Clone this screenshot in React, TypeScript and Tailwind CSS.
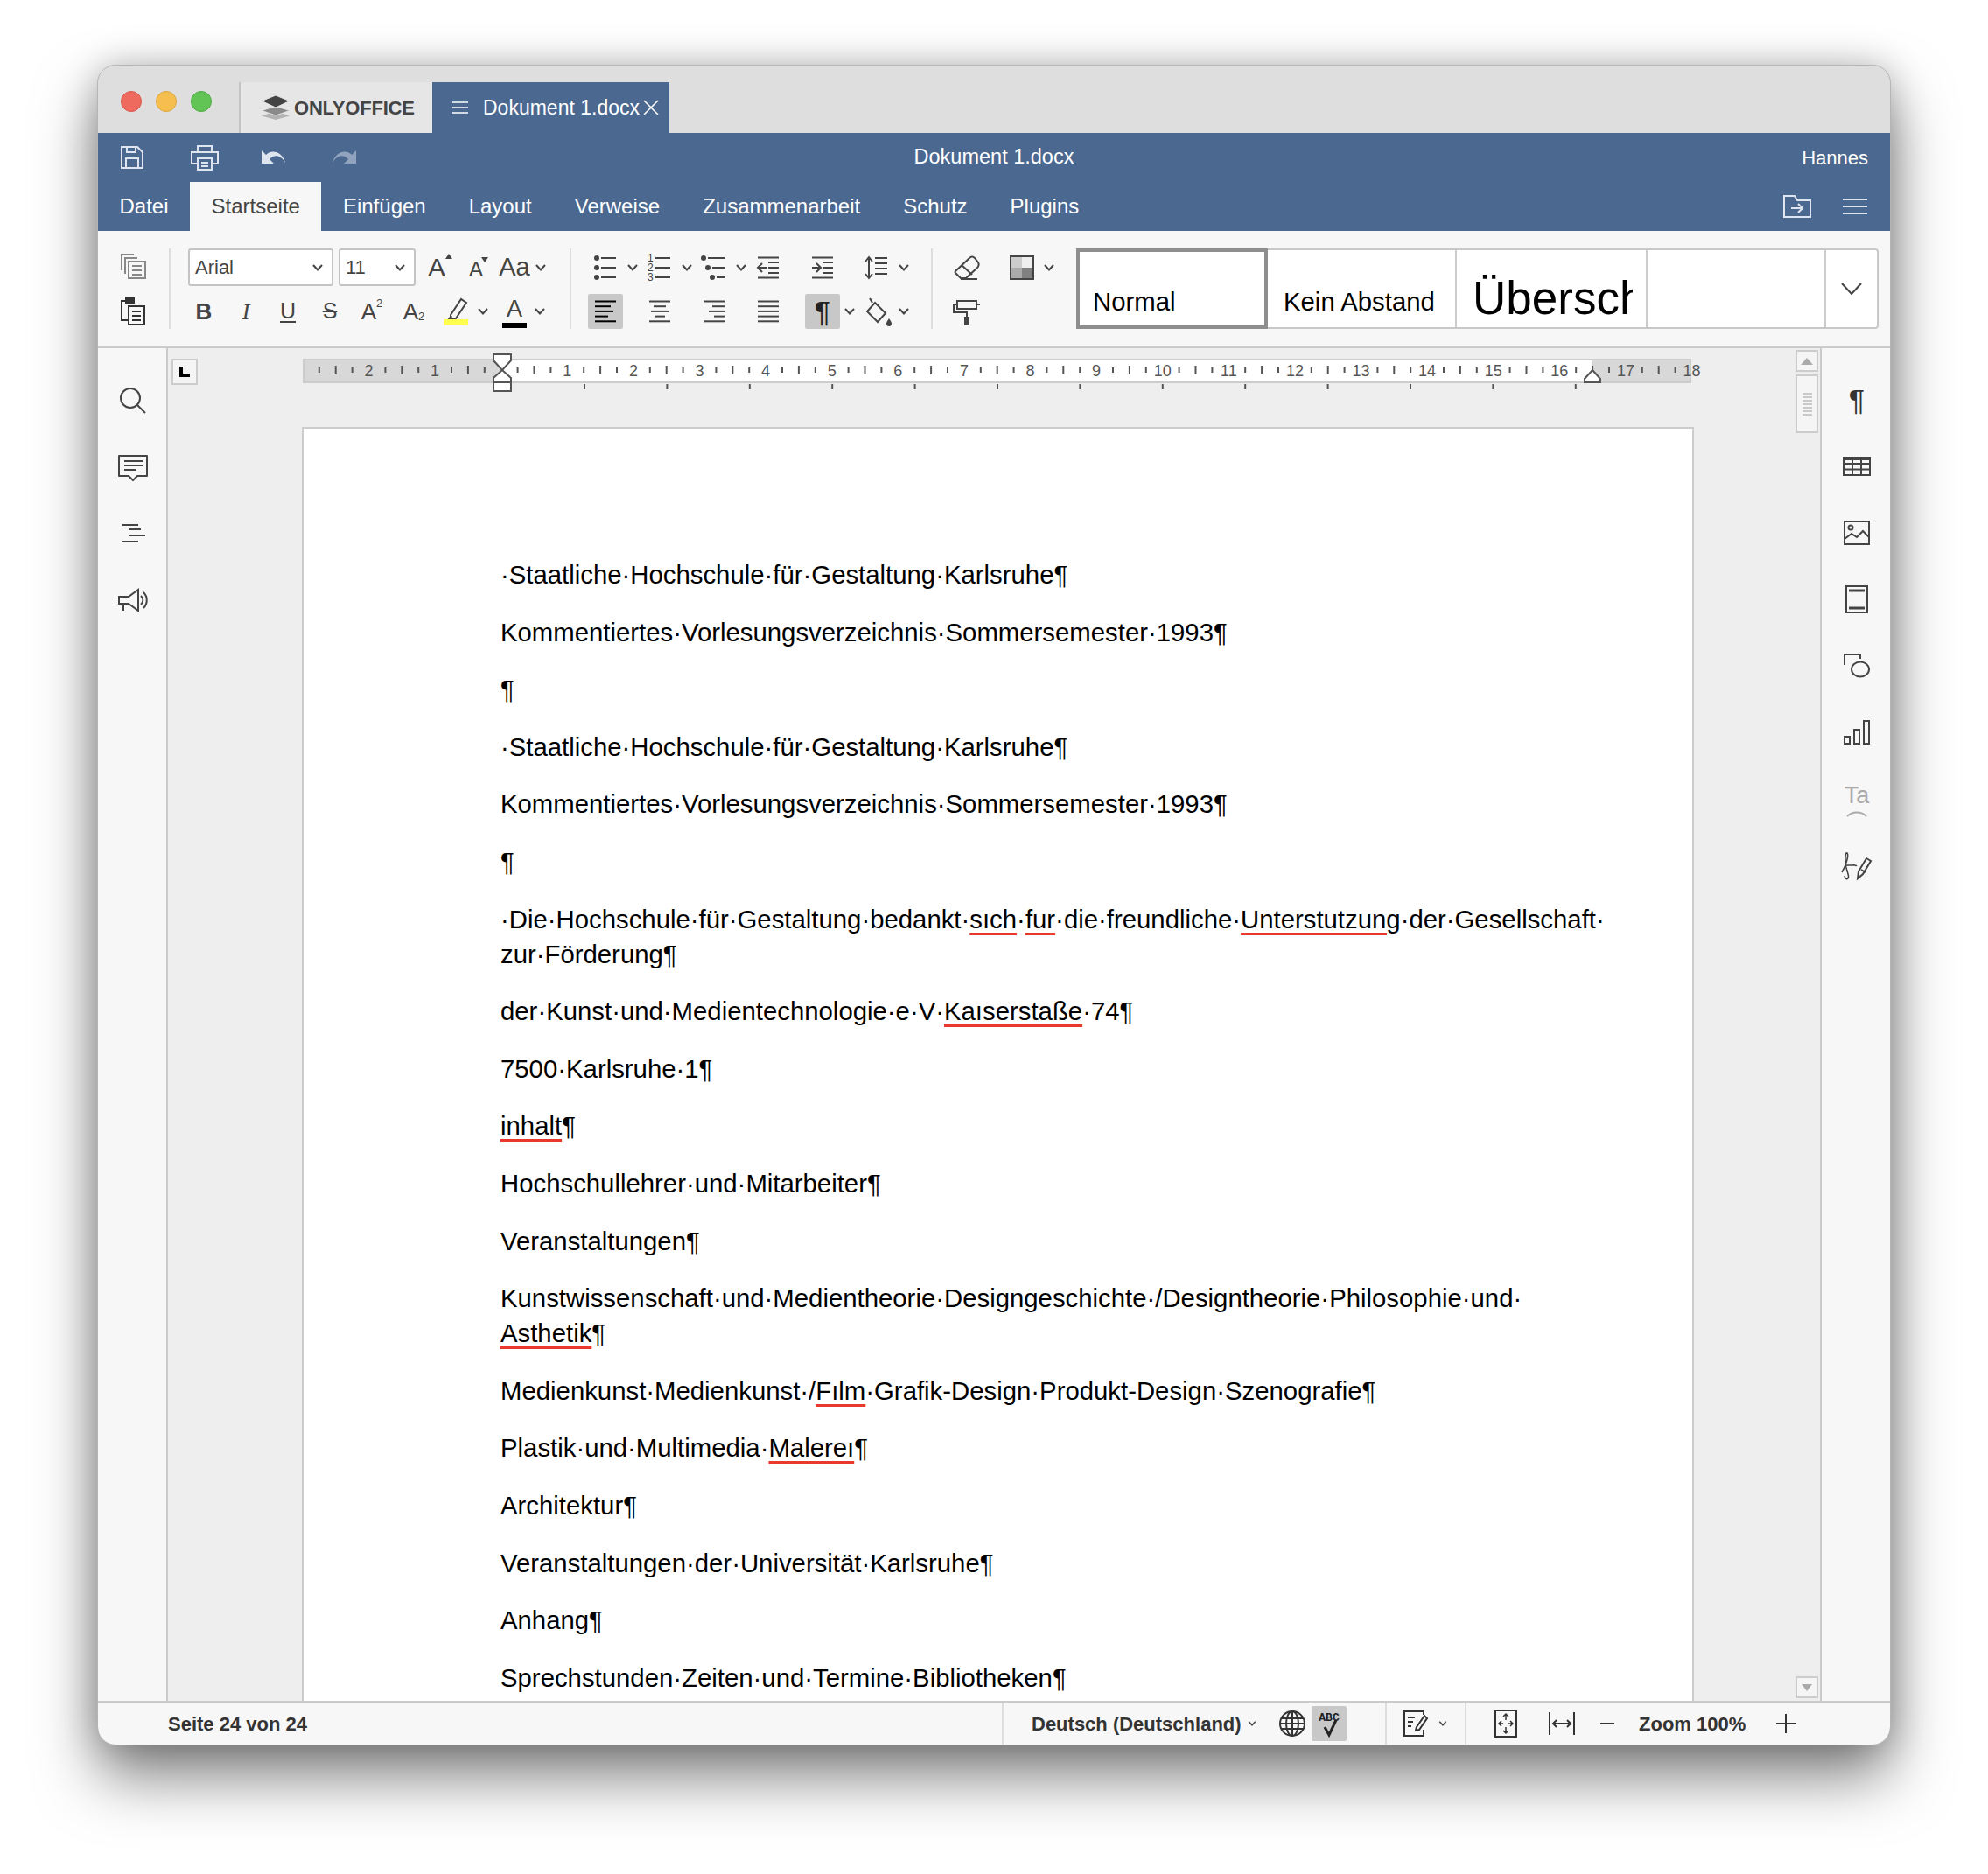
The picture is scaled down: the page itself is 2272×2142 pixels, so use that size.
import type { ReactNode } from 'react';

const tabs = ['Datei', 'Startseite', 'Einfügen', 'Layout', 'Verweise', 'Zusammenarbeit', 'Schutz', 'Plugins'];

// _word_ marks a word with the red spellcheck line
const paragraphs = [
  ['·Staatliche·Hochschule·für·Gestaltung·Karlsruhe¶'],
  ['Kommentiertes·Vorlesungsverzeichnis·Sommersemester·1993¶'],
  ['¶'],
  ['·Staatliche·Hochschule·für·Gestaltung·Karlsruhe¶'],
  ['Kommentiertes·Vorlesungsverzeichnis·Sommersemester·1993¶'],
  ['¶'],
  ['·Die·Hochschule·für·Gestaltung·bedankt·_sıch_·_fur_·die·freundliche·_Unterstutzung_·der·Gesellschaft·', 'zur·Förderung¶'],
  ['der·Kunst·und·Medientechnologie·e·V·_Kaıserstaße_·74¶'],
  ['7500·Karlsruhe·1¶'],
  ['_inhalt_¶'],
  ['Hochschullehrer·und·Mitarbeiter¶'],
  ['Veranstaltungen¶'],
  ['Kunstwissenschaft·und·Medientheorie·Designgeschichte·/Designtheorie·Philosophie·und·', '_Asthetik_¶'],
  ['Medienkunst·Medienkunst·/_Fılm_·Grafik-Design·Produkt-Design·Szenografie¶'],
  ['Plastik·und·Multimedia·_Malereı_¶'],
  ['Architektur¶'],
  ['Veranstaltungen·der·Universität·Karlsruhe¶'],
  ['Anhang¶'],
  ['Sprechstunden·Zeiten·und·Termine·Bibliotheken¶'],
];

const Ico = ({ children, className = 'text-[#444]' }: { children: ReactNode; className?: string }) => (
  <svg viewBox="0 0 40 40" fill="none" stroke="currentColor" strokeWidth="2" className={`w-10 h-10 shrink-0 ${className}`}>
    {children}
  </svg>
);

const Chev = ({ className = 'w-[22px]' }: { className?: string }) => (
  <span className={`flex items-center justify-center shrink-0 ${className}`}>
    <svg width="12" height="8" viewBox="0 0 12 8" fill="none" stroke="#444" strokeWidth="2"><path d="M1 1l5 5.5L11 1" /></svg>
  </span>
);

const Cell = ({ className, children }: { className: string; children: ReactNode }) => (
  <span className={`flex items-center justify-center shrink-0 h-10 ${className}`}>{children}</span>
);

const Blank = () => <span className="w-[22px] shrink-0" />;

const Lines = ({ rows }: { rows: [number, number][] }) => (
  <>
    {rows.map(([a, b], i) => (
      <path key={i} d={`M${a} ${8.5 + i * 5.7}H${b}`} />
    ))}
  </>
);

const Ruler = () => {
  const marks = Array.from({ length: 116 }, (_, i) => i - 11);
  return (
    <svg width="1600" height="46" className="ml-[120px] shrink-0 font-['Liberation_Sans',sans-serif]">
      <rect x="1" y="7" width="1585" height="26" fill="#d8d8d8" stroke="#ccc" strokeWidth="2" />
      <rect x="228" y="8" width="1246" height="24" fill="#fff" />
      <path d="M228 7H1474" stroke="#ccc" strokeWidth="2" />
      <path d="M228 33H1474" stroke="#ccc" strokeWidth="2" />
      {marks.map((k) => {
        const x = 226.7 + k * 18.9;
        if (k === 0) return null;
        if (k % 4 === 0) {
          return (
            <text key={k} x={x} y="26" textAnchor="middle" fontSize="18" fill="#555">
              {Math.abs(k / 4)}
            </text>
          );
        }
        const mid = k % 2 === 0;
        return <path key={k} d={`M${x} ${mid ? 14 : 16}V${mid ? 24 : 22}`} stroke="#555" strokeWidth="2" />;
      })}
      {Array.from({ length: 13 }, (_, k) => (
        <path key={k} d={`M${322 + k * 94.4} 35V41`} stroke="#555" strokeWidth="2" />
      ))}
      <path d="M218 1H238V8L228 19L218 8Z" fill="#fff" stroke="#555" strokeWidth="2" />
      <path d="M228 19L238 28V43H218V28Z" fill="#fff" stroke="#555" strokeWidth="2" />
      <path d="M218 33H238" stroke="#555" strokeWidth="2" />
      <path d="M1474 19L1483 29V33H1465V29Z" fill="#fff" stroke="#555" strokeWidth="2" />
    </svg>
  );
};

const Paragraph = ({ lines }: { lines: string[] }) => (
  <div className="mb-[25.6px]">
    {lines.map((line, i) => (
      <div key={i} className="whitespace-pre h-[40px] leading-[40px]">
        {line.split('_').map((part, j) =>
          j % 2 === 1 ? (
            <span key={j} className="underline decoration-[#e8392c] decoration-[2.5px] underline-offset-[5px]">{part}</span>
          ) : (
            <span key={j}>{part}</span>
          ),
        )}
      </div>
    ))}
  </div>
);

export default function App() {
  return (
    <div className="h-[2142px] overflow-hidden bg-white pt-[75px] pl-[112px] font-['Liberation_Sans',sans-serif]">
      <div className="w-[2048px] h-[1919px] flex flex-col rounded-[20px] overflow-hidden bg-[#f7f7f7] outline outline-1 outline-[#b5b5b5]" style={{ boxShadow: '0 36px 70px rgba(0,0,0,0.5), 0 0 40px rgba(0,0,0,0.22)', overflow: 'clip' }}>
        {/* Title bar */}
        <div className="h-[77px] shrink-0 bg-[#dedede] flex pt-[19px]">
          <div className="w-[161px] h-[58px] flex items-start pt-[10px] gap-[20px] pl-[26px]">
            <span className="w-6 h-6 rounded-full bg-[#ee6a5f] border border-[#d9574c]" />
            <span className="hidden" />
            <span className="w-6 h-6 rounded-full bg-[#f5be4f] border border-[#dba63c] -ml-[4px]" />
            <span className="w-6 h-6 rounded-full bg-[#61c454] border border-[#50ab44] -ml-[4px]" />
          </div>
          <div className="w-[221px] h-[58px] bg-[#e6e6e6] border-l-2 border-[#c4c4c4] flex items-center pl-[23px] gap-[4px]">
            <svg width="34" height="28" viewBox="0 0 34 28">
              <path d="M17 18L1 23.5L17 28L33 23.5Z" fill="#b3b3b3" />
              <path d="M17 12.5L1 17.5L17 23L33 17.5Z" fill="#8a8a8a" stroke="#e6e6e6" strokeWidth="1" />
              <path d="M17 0L1 6.5L17 14L33 6.5Z" fill="#444" stroke="#e6e6e6" strokeWidth="1" />
            </svg>
            <span className="text-[22px] font-bold text-[#444] tracking-[-0.2px]">ONLYOFFICE</span>
          </div>
          <div className="w-[271px] h-[58px] bg-[#4b6890] flex items-center text-white">
            <svg width="20" height="16" viewBox="0 0 20 16" stroke="#fff" strokeWidth="1.6" className="ml-[22px]"><path d="M1 2H19M1 8H19M1 14H19" /></svg>
            <span className="ml-[16px] text-[23px] whitespace-nowrap">Dokument 1.docx</span>
            <svg width="18" height="18" viewBox="0 0 18 18" stroke="#fff" strokeWidth="1.6" className="ml-[4px]"><path d="M1 1L17 17M17 1L1 17" /></svg>
          </div>
        </div>

        {/* Header */}
        <div className="h-[112px] shrink-0 bg-[#4b6890] text-white flex flex-col">
          <div className="h-[56px] relative flex items-center">
            <svg width="28" height="28" viewBox="0 0 28 28" fill="none" stroke="#dfe5ee" strokeWidth="2" className="ml-[25px]">
              <path d="M2 2H20L26 8V26H2Z" /><path d="M7 26V15H21V26M8 2V8H18V2" />
            </svg>
            <svg width="34" height="30" viewBox="0 0 34 30" fill="none" stroke="#dfe5ee" strokeWidth="2" className="ml-[52px]">
              <path d="M9 9V2H25V9M9 22H2V9H32V22H25" /><path d="M9 16H25V29H9ZM13 21H21M13 25H21" />
            </svg>
            <svg width="30" height="20" viewBox="0 0 30 20" className="ml-[47px]">
              <path d="M1 2V17H15L10 12C15 6 23 7 28 16C25 4 13 0 6 7Z" fill="#dfe5ee" />
            </svg>
            <svg width="30" height="20" viewBox="0 0 30 20" className="ml-[50px]">
              <path d="M29 2V17H15L20 12C15 6 7 7 2 16C5 4 17 0 24 7Z" fill="#92a4bd" />
            </svg>
            <span className="absolute left-0 right-0 text-center text-[23.5px] pl-[-4px]">Dokument 1.docx</span>
            <span className="absolute right-[25px] text-[22px]">Hannes</span>
          </div>
          <div className="h-[56px] flex items-stretch text-[24px]">
            {tabs.map((t) => (
              <div key={t} className={`px-[24.5px] flex items-center ${t === 'Startseite' ? 'bg-[#f7f7f7] text-[#444]' : ''}`}>{t}</div>
            ))}
            <div className="flex-1 flex items-center justify-end gap-[36px] pr-[26px]">
              <svg width="32" height="26" viewBox="0 0 32 26" fill="none" stroke="#dfe5ee" strokeWidth="2" className="mr-[0px]">
                <path d="M1 1H13L16 6H31V25H1Z" /><path d="M9 15H22M17 10L22 15L17 20" />
              </svg>
              <svg width="28" height="20" viewBox="0 0 28 20" stroke="#dfe5ee" strokeWidth="2"><path d="M0 2H28M0 10H28M0 18H28" /></svg>
            </div>
          </div>
        </div>

        {/* Toolbar */}
        <div className="h-[134px] shrink-0 border-b-2 border-[#cbcbcb] pt-[20px] flex text-[#444]">
          <div className="w-[83px] h-[92px] pl-[20px] border-r-2 border-[#ddd] flex flex-col justify-between">
            <Ico className="text-[#888]">
              <path d="M7 25V7H21" /><path d="M11 29V11H25" /><path d="M15 15H34V34H15Z" /><path d="M19 20H30M19 25H30M19 30H30" />
            </Ico>
            <Ico className="text-[#333]">
              <path d="M14 8H7V30H15" /><path d="M12 5H21V10H12Z" fill="currentColor" /><path d="M15 14H33V35H15Z" /><path d="M19 20H29M19 25H29M19 30H29" />
            </Ico>
          </div>

          <div className="w-[458px] h-[92px] border-r-2 border-[#ddd] flex flex-col justify-between">
            <div className="h-[43px] flex pl-[20px]">
              <div className="w-[166px] h-[43px] bg-white border-2 border-[#c4c4c4] rounded-[3px] flex items-center justify-between pl-[6px] pr-[10px] text-[22px]">
                Arial<Chev className="w-3" />
              </div>
              <div className="w-[88px] h-[43px] ml-[6px] bg-white border-2 border-[#c4c4c4] rounded-[3px] flex items-center justify-between pl-[6px] pr-[10px] text-[22px]">
                11<Chev className="w-3" />
              </div>
              <Cell className="w-[48px] !h-[43px] relative text-[30px] leading-none">A<svg width="8" height="6" viewBox="0 0 8 6" className="absolute top-[6px] right-[6px]"><path d="M0 6L4 0L8 6Z" fill="#444" /></svg></Cell>
              <Cell className="w-[42px] !h-[43px] relative text-[24px] leading-none pt-[4px]">A<svg width="8" height="6" viewBox="0 0 8 6" className="absolute top-[10px] right-[7px]"><path d="M0 0L4 6L8 0Z" fill="#444" /></svg></Cell>
              <Cell className="w-[46px] !h-[43px] text-[29px] leading-none">Aa</Cell>
              <Chev className="w-[14px]" />
            </div>
            <div className="h-10 flex pl-[14px]">
              <Cell className="w-[48px] text-[26px] font-bold">B</Cell>
              <Cell className="w-[48px] text-[26px] italic font-['Liberation_Serif',serif]">I</Cell>
              <Cell className="w-[48px] text-[25px] underline underline-offset-[3px] decoration-[2px]">U</Cell>
              <Cell className="w-[48px] text-[25px] line-through decoration-[2px]">S</Cell>
              <Cell className="w-[48px] text-[26px]">A<sup className="text-[13px] -mt-[6px]">2</sup></Cell>
              <Cell className="w-[48px] text-[26px]">A<sub className="text-[13px] mt-[6px]">2</sub></Cell>
              <Cell className="w-[48px]">
                <Ico>
                  <path d="M14 24L26 6L32 10L20 28L14 28Z" /><path d="M15 25L11 30H17" fill="currentColor" />
                  <path d="M9 32.500H37" stroke="#ffff4d" strokeWidth="7" transform="translate(-3 0)" />
                </Ico>
              </Cell>
              <Chev className="w-[14px]" />
              <Cell className="w-[44px] ml-[7px] relative text-[27px] leading-none pb-[6px]">A<span className="absolute left-[8px] right-[8px] bottom-[1px] h-[6px] bg-black" /></Cell>
              <Chev className="w-[14px]" />
            </div>
          </div>

          <div className="w-[413px] h-[92px] pl-[19px] border-r-2 border-[#ddd] flex flex-col justify-between">
            <div className="h-[43px] flex items-center">
              <Ico>
                <circle cx="10" cy="9" r="3" fill="currentColor" stroke="none" /><circle cx="10" cy="20" r="3" fill="currentColor" stroke="none" /><circle cx="10" cy="31" r="3" fill="currentColor" stroke="none" />
                <path d="M15 9H32M15 20H32M15 31H32" />
              </Ico>
              <Chev />
              <Ico>
                <text x="6" y="13" fontSize="12" fill="currentColor" stroke="none">1</text><text x="6" y="24" fontSize="12" fill="currentColor" stroke="none">2</text><text x="6" y="35" fontSize="12" fill="currentColor" stroke="none">3</text>
                <path d="M15 9H32M15 20H32M15 31H32" />
              </Ico>
              <Chev />
              <Ico>
                <circle cx="8" cy="9" r="3" fill="currentColor" stroke="none" /><circle cx="13" cy="20" r="3" fill="currentColor" stroke="none" /><circle cx="18" cy="31" r="3" fill="currentColor" stroke="none" />
                <path d="M13 9H32M18 20H32M23 31H32" />
              </Ico>
              <Chev />
              <Ico>
                <path d="M8 8.500H32M8 31.500H32M20 14H32M20 20H32M20 26H32" /><path d="M18 20H8M13 15L8 20L13 25" />
              </Ico>
              <Blank />
              <Ico>
                <path d="M8 8.500H32M8 31.500H32M20 14H32M20 20H32M20 26H32" /><path d="M8 20H18M13 15L18 20L13 25" />
              </Ico>
              <Blank />
              <Ico>
                <path d="M11 9V31M7 13L11 8L15 13M7 27L11 32L15 27" /><path d="M18 9H32M18 15H32M18 21H32M18 27H32" />
              </Ico>
              <Chev />
            </div>
            <div className="h-10 flex items-center">
              <span className="rounded-[2px] bg-[#c8c8c8]"><Ico className="text-black"><Lines rows={[[8, 32], [8, 26], [8, 29], [8, 23], [8, 32]]} /></Ico></span>
              <Blank />
              <Ico><Lines rows={[[8, 32], [13, 27], [10, 30], [14, 26], [8, 32]]} /></Ico>
              <Blank />
              <Ico><Lines rows={[[8, 32], [18, 32], [14, 32], [20, 32], [8, 32]]} /></Ico>
              <Blank />
              <Ico><Lines rows={[[8, 32], [8, 32], [8, 32], [8, 32], [8, 32]]} /></Ico>
              <Blank />
              <span className="w-10 h-10 rounded-[2px] bg-[#c8c8c8] flex items-center justify-center text-[34px] leading-none text-[#222]">¶</span>
              <Chev />
              <Ico>
                <path d="M12 5L15 10M18 10L30 22L21 32L9 20Z" /><path d="M34 28C36 31 37 32 37 34A3 3 0 0 1 31 34C31 32 32 31 34 28Z" fill="currentColor" stroke="none" />
              </Ico>
              <Chev />
            </div>
          </div>

          <div className="w-[164px] h-[92px] pl-[19px] flex flex-col justify-between">
            <div className="h-[43px] flex items-center">
              <Ico>
                <path d="M7 24L23 9C25 7 27 7 29 9L33 14C34 16 34 18 32 20L19 32H13L7 26C6 25 6 25 7 24Z" /><path d="M14 17L26 28M13 33H32" />
              </Ico>
              <div className="ml-[23px] w-10 flex items-center justify-center">
                <span className="w-7 h-7 grid grid-cols-2 border-2 border-[#444]">
                  <span className="bg-[#ccc]" /><span className="bg-[#eee]" /><span className="bg-[#aaa]" /><span className="bg-[#808080]" />
                </span>
              </div>
              <Chev />
            </div>
            <div className="h-10">
              <Ico>
                <path d="M9 8H31V17H9ZM31 12H35M9 12H5V21H20V26" /><path d="M17 26H23V36H17Z" fill="currentColor" stroke="none" />
              </Ico>
            </div>
          </div>

          <div className="w-[917px] h-[92px] flex text-black">
            <div className="w-[219px] border-[4px] border-[#8e8e8e] bg-white flex items-end pb-[9px] pl-[15px] text-[29.33px] leading-[36px]">Normal</div>
            <div className="flex-1 flex border-2 border-l-0 border-[#c8c8c8] rounded-r-[4px] bg-white">
              <div className="w-[216px] border-r-2 border-[#ccc] flex items-end pb-[11px] pl-[18px] text-[29.33px] leading-[36px] whitespace-nowrap">Kein Abstand</div>
              <div className="w-[218px] border-r-2 border-[#ccc] pl-[18px] pr-[15px]">
                <div className="overflow-hidden whitespace-nowrap h-full flex items-end pb-[3px] text-[53px] leading-[60px]">Überschrift</div>
              </div>
              <div className="w-[204px] border-r-2 border-[#ccc]" />
              <div className="flex-1 flex items-center justify-center">
                <svg width="24" height="14" viewBox="0 0 24 14" fill="none" stroke="#444" strokeWidth="2"><path d="M1 1L12 13L23 1" /></svg>
              </div>
            </div>
          </div>
        </div>

        {/* Main */}
        <div className="flex-1 min-h-0 flex">
          <div className="w-[80px] shrink-0 border-r-2 border-[#cbcbcb] flex flex-col pt-[22px] pl-[20px]">
            <div className="h-[76px] flex items-center"><Ico><circle cx="17" cy="17" r="11" /><path d="M25 25L34 34" /></Ico></div>
            <div className="h-[76px] flex items-center"><Ico><path d="M4 7H36V30H25L20 35L15 30H4Z" strokeLinejoin="round" /><path d="M10 13H31M10 18H31M10 23H24" /></Ico></div>
            <div className="h-[76px] flex items-center"><Ico><path d="M8 10H26M15 15H29M15 22H34M8 29H26" /></Ico></div>
            <div className="h-[76px] flex items-center"><Ico><path d="M4 16H15L26 8V32L15 24H4ZM9 24V32" /><path d="M29 15C32 18 32 22 29 25M32 11C37 16 37 24 32 29" /></Ico></div>
          </div>

          <div className="flex-1 min-w-0 flex bg-[#eee]">
            <div className="flex-1 min-w-0 flex flex-col pt-[6px]">
              <div className="flex items-start h-[46px] shrink-0">
                <div className="mt-[6px] ml-[4px] w-[30px] h-[30px] shrink-0 border-2 border-[#ccc] bg-[#f5f5f5] flex items-center justify-center">
                  <svg width="14" height="14" viewBox="0 0 14 14"><path d="M1 1H5V9H13V13H1Z" fill="#000" /></svg>
                </div>
                <Ruler />
              </div>
              <div className="mt-[38px] ml-[153px] w-[1591px] flex-1 min-h-0 overflow-hidden bg-white border-2 border-b-0 border-[#ccc] pt-[147px] pl-[225px] text-[29.33px] text-black">
                {paragraphs.map((lines, i) => (
                  <Paragraph key={i} lines={lines} />
                ))}
              </div>
            </div>
            <div className="w-[28px] shrink-0 pr-[2px] pt-[2px] pb-[3px] flex flex-col">
              <div className="h-[25px] border-2 border-[#ccc] bg-[#f5f5f5] flex items-center justify-center">
                <svg width="14" height="8" viewBox="0 0 14 8"><path d="M0 8L7 0L14 8Z" fill="#aaa" /></svg>
              </div>
              <div className="h-[67px] mt-[3px] border-2 border-[#ccc] bg-[#f5f5f5] flex items-center justify-center">
                <svg width="11" height="26" viewBox="0 0 11 26" stroke="#bbb" strokeWidth="1.5"><path d="M0 1H11M0 5H11M0 9H11M0 13H11M0 17H11M0 21H11M0 25H11" /></svg>
              </div>
              <div className="flex-1" />
              <div className="h-[25px] border-2 border-[#ccc] bg-[#f5f5f5] flex items-center justify-center">
                <svg width="12" height="8" viewBox="0 0 12 8"><path d="M0 0L6 8L12 0Z" fill="#aaa" /></svg>
              </div>
            </div>
          </div>

          <div className="w-[80px] shrink-0 border-l-2 border-[#cbcbcb] flex flex-col pt-[21px] pl-[20px] text-[#a3a3a3]">
            <div className="h-[76px] flex items-center justify-center w-10 text-[34px] text-[#333]">¶</div>
            <div className="h-[76px] flex items-center"><Ico><path d="M5 10H35V30H5ZM5 17H35M5 23.500H35M15 10V30M25 10V30" /><path d="M5 11.500H35" strokeWidth="3" /></Ico></div>
            <div className="h-[76px] flex items-center"><Ico><path d="M6 7H34V33H6Z" /><circle cx="13" cy="14" r="2.500" /><path d="M6 27L14 21L20 25L27 18L34 25" /></Ico></div>
            <div className="h-[76px] flex items-center"><Ico><path d="M8 5H32V35H8Z" /><path d="M11 10H29M11 30H29" strokeWidth="3" /></Ico></div>
            <div className="h-[76px] flex items-center"><Ico><path d="M6 19V7H24V12" /><ellipse cx="24" cy="24" rx="10" ry="8.500" /></Ico></div>
            <div className="h-[76px] flex items-center"><Ico><path d="M6 25H12V33H6ZM17 17H23V33H17ZM28 7H34V33H28Z" /></Ico></div>
            <div className="h-[76px] flex items-center justify-center w-10 relative">
              <span className="text-[27px] leading-none -mt-[8px] text-[#aaa]">Ta</span>
              <svg width="24" height="8" viewBox="0 0 24 8" fill="none" stroke="#aaa" strokeWidth="2" className="absolute bottom-[17px] left-[8px]"><path d="M1 7C7 1 17 1 23 7" /></svg>
            </div>
            <div className="h-[76px] flex items-center"><Ico><path d="M3 28C8 20 11 8 9 6C6 4 6 20 10 30C12 36 7 38 6 32M8 20H16C17 18 18 22 20 20" strokeWidth="1.6" /><path d="M21 35L22 27L31 12L36 15L27 30Z" /><path d="M25 25L30 28" /></Ico></div>
          </div>
        </div>

        {/* Status bar */}
        <div className="h-[50px] shrink-0 border-t-2 border-[#cbcbcb] flex items-center text-[22px] font-bold text-[#333]">
          <div className="w-[1033px] pl-[80px] shrink-0">Seite 24 von 24</div>
          <div className="w-[438px] h-full shrink-0 border-l-2 border-[#ddd] flex items-center pl-[32px]">
            <span className="whitespace-nowrap">Deutsch (Deutschland)</span>
            <Chev className="w-[24px] scale-75" />
            <span className="ml-[14px]"><Ico className="text-[#333]"><circle cx="20" cy="20" r="14" /><ellipse cx="20" cy="20" rx="7" ry="14" /><path d="M20 6V34M7 14H33M6 20H34M7 26H33" /></Ico></span>
            <span className="ml-[2px] w-10 h-10 rounded-[2px] bg-[#c8c8c8] flex items-center justify-center">
              <svg viewBox="0 0 40 40" className="w-10 h-10">
                <text x="20" y="17" textAnchor="middle" fontSize="13" fontWeight="700" fontFamily="'Liberation Mono', monospace" fill="#222">ABC</text>
                <path d="M15 24L20 33L28 16" fill="none" stroke="#222" strokeWidth="3" />
              </svg>
            </span>
          </div>
          <div className="w-[91px] h-full shrink-0 border-l-2 border-[#ddd] flex items-center pl-[12px]">
            <Ico className="text-[#333]"><path d="M24 6H8V34H30V27M8 6H30V10" /><path d="M12 13H20M12 18H18M12 23H16" /><path d="M22 24L31 11L34 14L25 27L21 28Z" /></Ico>
            <Chev className="w-[24px] scale-75" />
          </div>
          <div className="flex-1 h-full border-l-2 border-[#ddd] flex items-center pl-[25px]">
            <Ico className="text-[#333]"><path d="M8 5H32V35H8Z" /><path d="M20 9V16M17 12L20 9L23 12M20 31V24M17 28L20 31L23 28M12 20H17M15 17L12 20L15 23M28 20H23M25 17L28 20L25 23" strokeWidth="1.5" /></Ico>
            <span className="ml-[24px]"><Ico className="text-[#333]"><path d="M6 7V33M34 7V33M10 20H30M14 16L10 20L14 24M26 16L30 20L26 24" /></Ico></span>
            <span className="ml-[22px] w-[16px] h-[2px] bg-[#333] mr-[22px] -translate-x-[-2px]" />
            <span className="ml-[8px] whitespace-nowrap">Zoom 100%</span>
            <svg width="22" height="22" viewBox="0 0 22 22" stroke="#333" strokeWidth="2" className="ml-[35px]"><path d="M0 11H22M11 0V22" /></svg>
          </div>
        </div>
      </div>
    </div>
  );
}
